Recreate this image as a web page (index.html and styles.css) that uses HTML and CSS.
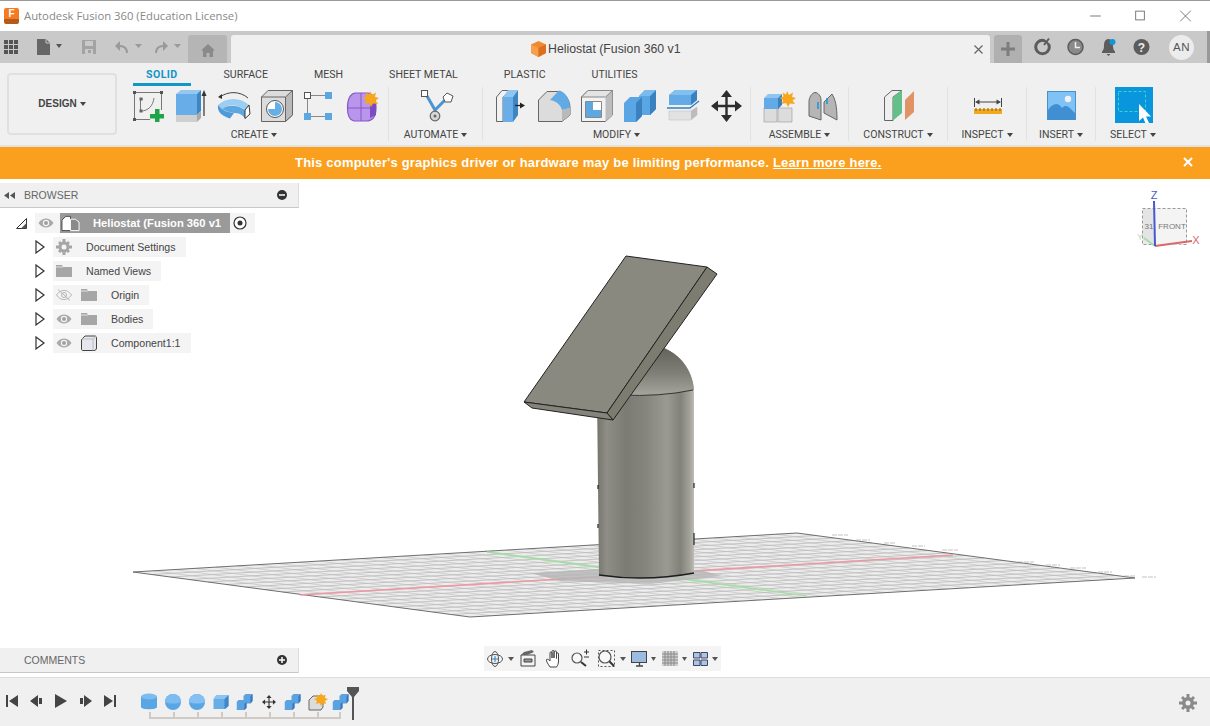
FILE: index.html
```html
<!DOCTYPE html>
<html lang="en">
<head>
<meta charset="utf-8">
<title>Autodesk Fusion 360</title>
<link rel="stylesheet" href="styles.css">
</head>
<body>
<svg class="defs" width="0" height="0" aria-hidden="true">
  <defs>
    <symbol id="eye" viewBox="0 0 16 12"><path d="M.5 6C3 2.5 5.500 1.500 8 1.500S13 2.500 15.500 6C13 9.500 10.500 10.500 8 10.500S3 9.500 .5 6Z" fill="#a9a9a9"/><circle cx="8" cy="6" r="3.200" fill="#f4f4f4"/><circle cx="8" cy="6" r="2" fill="#a0a0a0"/></symbol>
    <symbol id="folder" viewBox="0 0 16 12"><path d="M0 0H6L7 2H16V12H0Z" fill="#a6a6a6"/><path d="M0 2H7" stroke="#e0e0e0" fill="none"/></symbol>
    <symbol id="twisty" viewBox="0 0 10 14"><path d="M1 1L9 7L1 13Z" fill="#fff" stroke="#333" stroke-width="1.200"/></symbol>
    <symbol id="cube2" viewBox="0 0 17 16"><path d="M1 5L4 1H16V12L13 15H1Z" fill="#67ade6"/><path d="M12 5L16 1V12L12 15Z" fill="#3f87c6"/><path d="M1 5L4.500 1H16L12 5Z" fill="#8cc4f0"/></symbol>
    <symbol id="combine" viewBox="0 0 17 16"><path d="M0 8L2 6H7V2L9 0H16V7L14 9.500H10V14L8 16H0Z" fill="#5aa3e0"/><path d="M14 2.500L16 0V7L14 9.500ZM8 10L10 8V14L8 16Z" fill="#3577b4"/></symbol>
    <symbol id="move" viewBox="0 0 16 16"><path d="M8 2V14M2 8H14" stroke="#333" stroke-width="1.300"/><path d="M8 0L11 3.500H5ZM8 16L5 12.500H11ZM0 8L3.500 5V11ZM16 8L12.500 11V5Z" fill="#333"/></symbol>
  </defs>
</svg>

<div class="window">
  <header class="titlebar">
    <span class="logo"><b class="logo-f">F</b></span>
    <span class="title-text">Autodesk Fusion 360 (Education License)</span>
    <div class="win-controls">
      <svg class="win-btn" viewBox="0 0 45 31"><path d="M17 15.500H28" stroke="#777"/></svg>
      <svg class="win-btn" viewBox="0 0 45 31"><rect x="17.500" y="10.500" width="9" height="9" fill="none" stroke="#777"/></svg>
      <svg class="win-btn" viewBox="0 0 45 31"><path d="M17 10L28 21M28 10L17 21" stroke="#777"/></svg>
    </div>
  </header>

  <nav class="appbar">
    <div class="app-tools">
      <svg class="s30" viewBox="0 31 30 32"><path d="M4 40h4v4H4zM9 40h4v4H9zM14 40h4v4h-4zM4 45h4v4H4zM9 45h4v4H9zM14 45h4v4h-4zM4 50h4v4H4zM9 50h4v4H9zM14 50h4v4h-4z" fill="#555"/></svg>
      <svg class="s40" viewBox="30 31 40 32"><path d="M37 39H46L50 43V55H37Z" fill="#666"/><path d="M46 39V43H50" fill="none" stroke="#c9c9c9"/><path d="M56 44H62L59 48Z" fill="#555"/></svg>
      <svg class="s35" viewBox="70 31 35 32"><path d="M82 40H96V54H82Z" fill="#a3a3a3"/><path d="M85 41H93V46H85ZM85 49H93V54H85Z" fill="#c9c9c9"/><path d="M88 50H91V53H88Z" fill="#a3a3a3"/></svg>
      <svg class="s43" viewBox="105 31 43 32"><path d="M127 53C127 47 123 45.500 117 46" fill="none" stroke="#9a9a9a" stroke-width="2"/><path d="M115 46L120 41V51Z" fill="#9a9a9a"/><path d="M135 44H142L138.500 48Z" fill="#9a9a9a"/></svg>
      <svg class="s40" viewBox="148 31 40 32"><path d="M156 53C156 47 160 45.500 166 46" fill="none" stroke="#9a9a9a" stroke-width="2"/><path d="M168 46L163 41V51Z" fill="#9a9a9a"/><path d="M174 44H181L177.500 48Z" fill="#9a9a9a"/></svg>
    </div>
    <div class="home-tab">
      <svg class="home-icon" viewBox="0 0 14 13"><path d="M7 0L14 6.500H12V13H8.500V9H5.500V13H2V6.500H0Z" fill="#8a8a8a"/></svg>
    </div>
    <div class="doc-tab">
      <svg class="doc-cube" viewBox="0 0 15 16"><path d="M7.500 0L15 3.500V12L7.500 16L0 12V3.500Z" fill="#f08a32"/><path d="M7.500 7V16L0 12V3.500Z" fill="#f5a04a"/><path d="M7.500 7V16L15 12V3.500Z" fill="#dc6e1c"/></svg>
      <span class="doc-title">Heliostat (Fusion 360 v1</span>
      <svg class="doc-close" viewBox="0 0 9 9"><path d="M.5 .5L8.500 8.500M8.500 .5L.5 8.500" stroke="#666" stroke-width="1.200"/></svg>
    </div>
    <div class="plus-tab">
      <svg class="plus-icon" viewBox="0 0 14 14"><path d="M5.500 0H8.500V5.500H14V8.500H8.500V14H5.500V8.500H0V5.500H5.500Z" fill="#7d7d7d"/></svg>
    </div>
    <div class="app-status">
      <svg class="status-icon" viewBox="0 0 33 32"><circle cx="16.500" cy="16" r="6.800" fill="none" stroke="#5c5c5c" stroke-width="3"/><path d="M16 6H24V13Z" fill="#c9c9c9"/><path d="M18 14L23 7.500" stroke="#5c5c5c" stroke-width="2"/></svg>
      <svg class="status-icon" viewBox="0 0 33 32"><circle cx="16.500" cy="16" r="7.500" fill="#8a8a8a" stroke="#5c5c5c" stroke-width="1.500"/><path d="M16.500 11V16.500H21" fill="none" stroke="#eee" stroke-width="1.500"/></svg>
      <svg class="status-icon" viewBox="0 0 33 32"><path d="M16.500 8C12.500 8 12 12 12 15C12 18 11 19.500 10 20.500V22H23V20.500C22 19.500 21 18 21 15C21 12 20.500 8 16.500 8Z" fill="#5c5c5c"/><path d="M14.500 23H18.500L16.500 25Z" fill="#5c5c5c"/><circle cx="20.500" cy="11" r="3" fill="#1296db"/></svg>
      <svg class="status-icon" viewBox="0 0 33 32"><circle cx="16.500" cy="16" r="8" fill="#5c5c5c"/><text class="help-q" x="16.500" y="20.500" text-anchor="middle">?</text></svg>
      <span class="avatar">AN</span>
    </div>
  </nav>

  <section class="ribbon">
    <div class="design-wrap"><button class="design-btn">DESIGN<i class="caret"></i></button></div>
    <div class="ribbon-main">
      <div class="tabs">
        <span class="tab is-active">SOLID</span><span class="tab">SURFACE</span><span class="tab">MESH</span><span class="tab">SHEET METAL</span><span class="tab">PLASTIC</span><span class="tab">UTILITIES</span>
      </div>
      <div class="groups">
        <div class="group">
          <div class="tools">
            <svg class="w41" viewBox="128 87 41 36"><path d="M134.500 92.500H161.500V110M134.500 92.500V119.500H150" fill="none" stroke="#777"/><path d="M133 91h3v3h-3zM160 91h3v3h-3zM133 118h3v3h-3z" fill="#555"/><path d="M140.500 111V99H143M141 111C148 111 153 106 154 98" fill="none" stroke="#777"/><path d="M139.500 97.500h3v3h-3zM139.500 109.500h3v3h-3z" fill="#666"/><path d="M155 109H159.500V114H164V118.500H159.500V122H155V118.500H150V114H155Z" fill="#1fa548"/></svg>
            <svg class="w42" viewBox="169 87 42 36"><path d="M176 94L181 90H201L197 94Z" fill="#92c8f2"/><path d="M176 94H197V115H176Z" fill="#68ade8"/><path d="M197 94L201 90V111L197 115Z" fill="#3d86c4"/><path d="M176 115H197V122H176Z" fill="#cfcfcf"/><path d="M197 115L201 111V118L197 122Z" fill="#a9a9a9"/><path d="M204 94V116" stroke="#333" stroke-width="1.200"/><path d="M204 90L201.500 96H206.500Z" fill="#333"/></svg>
            <svg class="w44" viewBox="211 87 44 36"><path d="M218 105C226 97 241 97 249 105L245 110C237 104 228 104 222 109Z" fill="#9ccdf2"/><path d="M218 105C217 112 222 116 230 118.500L234 113C228 112 224 111 222 109Z" fill="#4f9ad8"/><path d="M234 113C238 113 242 114 245 118.500V110C238 105 228 104 222 109C225 111 229 112 234 113Z" fill="#5da7e0"/><path d="M245 110L249 105L250 114L245 118.500Z" fill="#fff" stroke="#333"/><path d="M220 97C228 91 240 91 248 98" fill="none" stroke="#444"/><path d="M218 97L222 94V99Z" fill="#333"/></svg>
            <svg class="w42" viewBox="255 87 42 36"><path d="M261.500 97L268 90.500H292.500V115L285.500 121.500H261.500Z" fill="#dcdcdc" stroke="#666"/><path d="M285.500 97L292.500 90.500V115L285.500 121.500Z" fill="#b9b9b9" stroke="#666"/><path d="M261.500 97H285.500" stroke="#666"/><circle cx="275" cy="109" r="8.500" fill="#fff" stroke="#555"/><path d="M275 102A7 7 0 1 1 268 109L275 109Z" fill="#66aee6"/></svg>
            <svg class="w43" viewBox="297 87 43 36"><path d="M311 95.500H325M307.500 99V113M311 116.500H325" stroke="#888"/><rect x="304.500" y="92.500" width="6" height="6" fill="#fff" stroke="#555"/><path d="M325 92h7v7h-7zM304 113h7v7h-7zM325 113h7v7h-7z" fill="#5ba7e2"/></svg>
            <svg class="w48" viewBox="340 87 48 36"><path d="M355 93H368C374 94 376 100 376 108C376 117 372 121 366 121H354C349 120 347.500 116 347.500 108C347.500 98 350 94 355 93Z" fill="#b996ec" stroke="#8757c8" stroke-width="1.200"/><path d="M348 108H376M361 93V121" stroke="#8757c8"/><path d="M370 103H376V115L370 118Z" fill="#7b4bc0"/><path d="M370 91L372 95L376 92.500L375 97L379 98L375.500 100.500L378 104L373 103.500L371 107L369 103L365 104L366 100L362.500 98L366.500 96.500L365.500 92.500L369 94.500Z" fill="#f8a61c"/></svg>
          </div>
          <div class="group-label label-create">CREATE<i class="caret"></i></div>
        </div>
        <div class="group g-automate">
          <div class="tools">
            <svg class="w93" viewBox="389 87 93 36"><path d="M427 96L435 110L447 98M435 110V116" fill="none" stroke="#4f94d0" stroke-width="3"/><rect x="421.500" y="90.500" width="6" height="6" fill="#fff" stroke="#555"/><path d="M447 93L453 96L451 102H445L443 97Z" fill="#fff" stroke="#555"/><circle cx="435" cy="116" r="4.800" fill="#d6d6d6" stroke="#666" stroke-width="1.200"/><circle cx="435" cy="116" r="1.500" fill="#666"/></svg>
          </div>
          <div class="group-label">AUTOMATE<i class="caret"></i></div>
        </div>
        <div class="group">
          <div class="tools">
            <svg class="w48" viewBox="483 87 48 36"><path d="M496.500 97L502 90.500H510L503 97V121.500H496.500Z" fill="#f2f2f2" stroke="#666"/><path d="M503 97H513V122H503Z" fill="#69aee8"/><path d="M503 97L508 90H518L513 97Z" fill="#8ec6f0"/><path d="M513 97L518 90V115L513 122Z" fill="#3d86c4"/><path d="M515 105.500H522" stroke="#222" stroke-width="1.300"/><path d="M525 105.500L520 102.500V108.500Z" fill="#222"/></svg>
            <svg class="w44" viewBox="531 87 44 36"><path d="M538.500 121.500V100L547 91.500H557C565 92 570 100 570 108V115L562 121.500Z" fill="#dcdcdc" stroke="#666"/><path d="M550 100L559 90.500C566 92 570 100 570 108L562 110C561 105 556 101 550 100Z" fill="#62aae4"/><path d="M562 110L570 108V115L562 121.500Z" fill="#b9b9b9"/></svg>
            <svg class="w43" viewBox="575 87 43 36"><path d="M581.500 97L588 90.500H612.500V115L605.500 121.500H581.500Z" fill="#f2f2f2" stroke="#666"/><path d="M605.500 97L612.500 90.500V115L605.500 121.500Z" fill="#bdbdbd"/><path d="M581.500 97L588 90.500H612.500L605.500 97Z" fill="#e4e4e4" stroke="#888"/><path d="M585.500 101.500H601.500V117.500H585.500Z" fill="#fff" stroke="#888"/><path d="M586 102H593V110H601V117H586Z" fill="#5ea8e2"/></svg>
            <svg class="w44" viewBox="618 87 44 36"><path d="M624 103L630 97H639V96L645 90H656V109L650 115H642V116L636 122H624Z" fill="#5aa5e4"/><path d="M650 96L656 90V109L650 115ZM636 103L642 97V116L636 122Z" fill="#3b80bf"/><path d="M639 96L645 90H656L650 96Z" fill="#79bbee"/></svg>
            <svg class="w43" viewBox="662 87 43 36"><path d="M669 95L675 90H697V100L691 105H669Z" fill="#62abe6"/><path d="M669 95L675 90H697L691 95Z" fill="#82c0ee"/><path d="M691 95L697 90V100L691 105Z" fill="#3b80bf"/><path d="M667 108H690L699 101" fill="none" stroke="#2f80c0" stroke-width="1.300"/><path d="M669 111H691L697 107V115L691 120H669Z" fill="#e2e2e2" stroke="#bbb" stroke-width=".5"/><path d="M691 111L697 107V115L691 120Z" fill="#bcbcbc"/></svg>
            <svg class="w45" viewBox="705 87 45 36"><path d="M726.500 95V117M716 106H737" stroke="#2d2d2d" stroke-width="2.400"/><path d="M726.500 90L732 97H721ZM726.500 122L721 115H732ZM711 106L718 100.500V111.500ZM742 106L735 111.500V100.500Z" fill="#2d2d2d"/></svg>
          </div>
          <div class="group-label">MODIFY<i class="caret"></i></div>
        </div>
        <div class="group">
          <div class="tools">
            <svg class="w50" viewBox="751 87 50 36"><path d="M764 108H777V122H764ZM778 108H792V122H778Z" fill="#dcdcdc" stroke="#999" stroke-width=".6"/><path d="M764 98L768 94H782L778 98Z" fill="#8ec6f0"/><path d="M764 98H778V109H764Z" fill="#62abe6"/><path d="M778 98L782 94V105L778 109Z" fill="#3b80bf"/><path d="M787 91L789 95L793 92.500L792 97L796 98L792.500 100.500L795 104L790 103.500L788 107L786 103L782 104L783 100L779.500 98L783.500 96.500L782.500 92.500L786 94.500Z" fill="#f8a61c"/></svg>
            <svg class="w47" viewBox="801 87 47 36"><path d="M809 116V102C809 97 812 93 815 92.500C818 92.500 821 96 821 100V120Z" fill="#b5b5b5" stroke="#666"/><path d="M824 102L832 94C835 99 837 105 837 120L824 113Z" fill="#b5b5b5" stroke="#666"/><path d="M818 102V109M827 98V104" stroke="#1296db" stroke-width="1.500"/></svg>
          </div>
          <div class="group-label">ASSEMBLE<i class="caret"></i></div>
        </div>
        <div class="group">
          <div class="tools">
            <svg class="w98" viewBox="849 87 98 36"><path d="M884.500 97L892 90.500H902L893 97V120.500H884.500Z" fill="#efefef" stroke="#666"/><path d="M893 97L902 90V113L893 120.500Z" fill="#63c08a"/><path d="M905 100L914 91V112L905 120Z" fill="#e09364"/></svg>
          </div>
          <div class="group-label">CONSTRUCT<i class="caret"></i></div>
        </div>
        <div class="group">
          <div class="tools">
            <svg class="w78" viewBox="948 87 78 36"><path d="M974.500 98V107M1001.500 98V107M977 102H999" stroke="#444"/><path d="M975 102L979.500 99.500V104.500ZM1001 102L996.500 104.500V99.500Z" fill="#444"/><path d="M974 109H1002V114H974Z" fill="#f4a81c"/><path d="M976 108v3M980 108v3M984 108v3M988 108v3M992 108v3M996 108v3M1000 108v3" stroke="#80601a"/></svg>
          </div>
          <div class="group-label">INSPECT<i class="caret"></i></div>
        </div>
        <div class="group">
          <div class="tools">
            <svg class="w68" viewBox="1027 87 68 36"><rect x="1047.500" y="91.500" width="28" height="28" fill="#7fc3f6" stroke="#4a90c8"/><circle cx="1068" cy="99" r="3.200" fill="#f2f2f2"/><path d="M1048 119.500V110C1053 103 1058 102 1062 108C1066 103 1070 108 1075 113V119.500Z" fill="#3f8fd2"/></svg>
          </div>
          <div class="group-label">INSERT<i class="caret"></i></div>
        </div>
        <div class="group g-last">
          <div class="tools">
            <svg class="w74" viewBox="1096 87 74 36"><rect x="1115" y="87" width="38" height="38" fill="#0a96dc"/><rect x="1118.500" y="91.500" width="27" height="20" fill="none" stroke="#3fd4c8" stroke-dasharray="3 2"/><path d="M1139 104V121L1143 117.500L1146 124.500L1149 123L1146 116.500H1151Z" fill="#fff"/></svg>
          </div>
          <div class="group-label">SELECT<i class="caret"></i></div>
        </div>
      </div>
    </div>
  </section>

  <div class="banner">
    <p class="banner-text">This computer's graphics driver or hardware may be limiting performance. <a class="banner-link" href="#">Learn more here.</a></p>
    <svg class="banner-close" viewBox="0 0 10 10"><path d="M1 1L9 9M9 1L1 9" stroke="#fff" stroke-width="2"/></svg>
  </div>

  <main class="viewport">
    <svg class="scene" viewBox="0 179 1210 498" aria-hidden="true">
      <defs>
        <linearGradient id="body" x1="0" x2="1" y1="0" y2="0">
          <stop offset="0" stop-color="#74746c"/><stop offset=".1" stop-color="#8e8e86"/><stop offset=".3" stop-color="#7b7b73"/><stop offset=".5" stop-color="#85857d"/><stop offset=".72" stop-color="#9a9a92"/><stop offset=".86" stop-color="#82827a"/><stop offset=".96" stop-color="#a4a49c"/><stop offset="1" stop-color="#bdbdb4"/>
        </linearGradient>
        <linearGradient id="dome" x1="0" x2="0" y1="0" y2="1">
          <stop offset="0" stop-color="#5f5f57"/><stop offset=".55" stop-color="#807f77"/><stop offset="1" stop-color="#a8a79f"/>
        </linearGradient>
      </defs>
      <path d="M133 572L797 533L1135 578L470 617Z" fill="#ededed"/>
      <path class="grid-a" d="M151.700 574.500l664-39M170.400 577l664-39M189.200 579.500l664-39M207.900 582l664-39M226.600 584.500l664-39M245.300 587l664-39M264.100 589.500l664-39M282.800 592l664-39M301.500 594.500l664-39M320.200 597l664-39M339 599.500l664-39M357.700 602l664-39M376.400 604.500l664-39M395.100 607l664-39M413.900 609.500l664-39M432.600 612l664-39M451.300 614.500l664-39"/>
      <path class="grid-b" d="M153.750 570.780l337 45M174.500 569.560l337 45M195.250 568.340l337 45M216 567.130l337 45M236.750 565.910l337 45M257.500 564.690l337 45M278.250 563.470l337 45M299 562.250l337 45M319.750 561.030l337 45M340.500 559.810l337 45M361.250 558.590l337 45M382 557.380l337 45M402.750 556.160l337 45M423.500 554.940l337 45M444.250 553.720l337 45M465 552.500l337 45M485.750 551.280l337 45M506.500 550.060l337 45M527.250 548.840l337 45M548 547.630l337 45M568.750 546.410l337 45M589.500 545.190l337 45M610.250 543.970l337 45M631 542.750l337 45M651.750 541.530l337 45M672.500 540.310l337 45M693.250 539.090l337 45M714 537.880l337 45M734.750 536.660l337 45M755.500 535.440l337 45M776.250 534.220l337 45"/>
      <path d="M133 572L797 533L1135 578L470 617Z" fill="none" stroke="#6e6e6e"/>
      <path d="M300 595L953 555" stroke="#eb9aa4" stroke-width="1.600"/>
      <path d="M487 552L807 596" stroke="#a2e0a2" stroke-width="1.600"/>
      <path d="M530 573L600 569L700 570L722 576L650 584L560 581Z" fill="#b5b5b5" opacity=".8"/>
      <path d="M832 535H848M856 540H870M884 543H896M912 546H925M942 550H958M1018 562H1034M1046 565H1060M1070 568H1086M1098 572H1112M1124 576H1136M1142 577H1156" stroke="#aaa" stroke-width=".7" stroke-dasharray="5 1"/>
      <path d="M597 393A48.500 48.500 0 0 1 694 393L694 573Q646 582 599 575Z" fill="url(#body)"/>
      <path d="M597 396A48.500 48.500 0 0 1 694 390Q650 398 597 396Z" fill="url(#dome)"/>
      <path d="M620 395Q660 397 693 390" fill="none" stroke="#333"/>
      <path d="M599 575Q646 582 694 573" fill="none" stroke="#1d1d1d" stroke-width="1.500"/>
      <path d="M598 485V489M598 524V528M694 483V488M694 533V545" stroke="#222" stroke-width="1.200"/>
      <path d="M626 256L707 267L607 413L524 402Z" fill="#8a8980" stroke="#222"/>
      <path d="M707 267L717 274L613 420L607 413Z" fill="#7d7c70" stroke="#222"/>
      <path d="M524 402L607 413L613 420L532 408Z" fill="#85847a" stroke="#222"/>
    </svg>

    <aside class="panel browser">
      <div class="panel-head">
        <svg class="collapse" viewBox="0 0 11 7"><path d="M5 0V7L0 3.500ZM11 0V7L6 3.500Z" fill="#555"/></svg>
        <span class="panel-title">BROWSER</span>
        <svg class="panel-sign" viewBox="0 0 10 10"><circle cx="5" cy="5" r="5" fill="#333"/><path d="M2 5H8" stroke="#fff" stroke-width="1.500"/></svg>
      </div>
      <div class="tree">
        <div class="row row-root">
          <svg class="twisty-open" viewBox="0 0 11 11"><path d="M10.500 .5V10.500H.5Z" fill="#fff" stroke="#333"/><path d="M10.500 5V10.500H5Z" fill="#555"/></svg>
          <div class="pill pill-root">
            <svg class="ic16" viewBox="0 0 16 12"><use href="#eye"/></svg>
            <div class="root-sel">
              <svg class="root-ic" viewBox="0 0 20 18"><path d="M1 6L5 2H10V17H1Z" fill="#fff" stroke="#444"/><path d="M10 5H15L19 8V17H10Z" fill="#8a8a8a" stroke="#fff"/></svg>
              <span class="root-name">Heliostat (Fusion 360 v1</span>
            </div>
            <svg class="radio" viewBox="0 0 14 14"><circle cx="7" cy="7" r="6" fill="#fff" stroke="#333" stroke-width="1.200"/><circle cx="7" cy="7" r="2.500" fill="#333"/></svg>
          </div>
        </div>
        <div class="row">
          <svg class="twisty" viewBox="0 0 10 14"><use href="#twisty"/></svg>
          <div class="pill">
            <svg class="ic-large" viewBox="0 0 16 16"><g fill="#a6a6a6"><circle cx="8" cy="8" r="5.500"/><path d="M6.500 0h3v16h-3zM0 6.500h16v3H0z"/><path d="M2 4L4 2L14 12L12 14ZM12 2L14 4L4 14L2 12Z"/></g><circle cx="8" cy="8" r="2.500" fill="#f4f4f4"/></svg>
            <span class="row-text">Document Settings</span>
          </div>
        </div>
        <div class="row">
          <svg class="twisty" viewBox="0 0 10 14"><use href="#twisty"/></svg>
          <div class="pill">
            <svg class="ic16" viewBox="0 0 16 12"><use href="#folder"/></svg>
            <span class="row-text">Named Views</span>
          </div>
        </div>
        <div class="row">
          <svg class="twisty" viewBox="0 0 10 14"><use href="#twisty"/></svg>
          <div class="pill">
            <svg class="ic16" viewBox="0 0 16 12"><path d="M.5 6C3 2.500 5.500 1.500 8 1.500S13 2.500 15.500 6C13 9.500 10.500 10.500 8 10.500S3 9.500 .5 6Z" fill="none" stroke="#b4b4b4"/><circle cx="8" cy="6" r="2.500" fill="none" stroke="#b4b4b4"/><path d="M2 .5L14 11.500" stroke="#b4b4b4"/></svg>
            <svg class="ic16" viewBox="0 0 16 12"><use href="#folder"/></svg>
            <span class="row-text">Origin</span>
          </div>
        </div>
        <div class="row">
          <svg class="twisty" viewBox="0 0 10 14"><use href="#twisty"/></svg>
          <div class="pill">
            <svg class="ic16" viewBox="0 0 16 12"><use href="#eye"/></svg>
            <svg class="ic16" viewBox="0 0 16 12"><use href="#folder"/></svg>
            <span class="row-text">Bodies</span>
          </div>
        </div>
        <div class="row">
          <svg class="twisty" viewBox="0 0 10 14"><use href="#twisty"/></svg>
          <div class="pill">
            <svg class="ic16" viewBox="0 0 16 12"><use href="#eye"/></svg>
            <svg class="ic-large" viewBox="0 0 16 16"><path d="M1 4L4 1H14C15 1 15.500 2 15.500 3V13C15.500 14.500 14.500 15.500 13 15.500H2C1 15.500 .5 15 .5 14V5Z" fill="#e6e6ee" stroke="#444"/><path d="M1 4H12V15.500M12 4L15 1.500" fill="none" stroke="#bbb"/></svg>
            <span class="row-text">Component1:1</span>
          </div>
        </div>
      </div>
    </aside>

    <div class="viewcube">
      <svg class="cube-svg" viewBox="1130 188 75 65">
        <rect x="1142.500" y="208.500" width="44" height="36" fill="#ececec" stroke="#9a9a9a" stroke-dasharray="3 2"/>
        <path d="M1155 209H1186V244L1156 246Z" fill="#f4f4f4"/>
        <path d="M1143 209V240L1155 246V209Z" fill="#e4e4e4"/>
        <path d="M1155 246L1144 238" stroke="#a8dca8" stroke-width="2"/>
        <path d="M1155 246L1192 241" stroke="#d86a6a" stroke-width="2"/>
        <path d="M1155 246L1154 201" stroke="#4a58d0" stroke-width="2"/>
        <text class="axis axis-z" x="1154" y="199" text-anchor="middle">Z</text>
        <text class="axis axis-x" x="1196" y="244" text-anchor="middle">X</text>
        <text class="axis axis-y" x="1140" y="240" text-anchor="middle">Y</text>
        <text class="cube-face" x="1172" y="229" text-anchor="middle">FRONT</text>
        <text class="cube-face" x="1149" y="229" text-anchor="middle">31</text>
      </svg>
    </div>

    <aside class="panel comments">
      <div class="panel-head">
        <span class="panel-title">COMMENTS</span>
        <svg class="panel-sign" viewBox="0 0 10 10"><circle cx="5" cy="5" r="5" fill="#333"/><path d="M2 5H8M5 2V8" stroke="#fff" stroke-width="1.500"/></svg>
      </div>
    </aside>

    <div class="navbar">
      <svg class="n34" viewBox="484 646 34 25"><ellipse cx="495" cy="659" rx="7.500" ry="4.500" fill="none" stroke="#555"/><ellipse cx="495" cy="659" rx="3.500" ry="7.500" fill="none" stroke="#555"/><path d="M495 656V662M492 659H498" stroke="#2f80c0"/><path d="M508 657H514L511 661Z" fill="#555"/></svg>
      <svg class="n24" viewBox="518 646 24 25"><path d="M521 655H535V666H521Z" fill="#f4f4f4" stroke="#444"/><path d="M524 659H532V662H524Z" fill="#999" stroke="#444"/><path d="M521 655L524 652L532 650L534 652L527 655" fill="#666"/></svg>
      <svg class="n26" viewBox="542 646 26 25"><path d="M550 667C548 664 546 661 546.500 659.500C547.500 658.500 549 660 550 661V653C550 651.500 552 651.500 552 653V658V651.500C552 650 554 650 554 651.500V658V652C554 650.500 556.500 650.500 556.500 652V658.500V654C556.500 652.500 558.500 652.500 558.500 654V661C558.500 664 557.500 665.500 556.500 667Z" fill="#fff" stroke="#444"/></svg>
      <svg class="n26" viewBox="568 646 26 25"><circle cx="577" cy="658" r="5" fill="#f8f8f8" stroke="#555" stroke-width="1.200"/><path d="M581 662L586 666" stroke="#333" stroke-width="2"/><path d="M584 652H589M586.500 649.500V654.500M584 657H589" stroke="#333"/></svg>
      <svg class="n34" viewBox="594 646 34 25"><path d="M598.500 650.500H614.500V666.500H598.500Z" fill="none" stroke="#555" stroke-dasharray="2 2"/><circle cx="605" cy="657" r="6" fill="#f8f8f8" stroke="#555" stroke-width="1.200"/><path d="M609.500 661.500L614 666" stroke="#333" stroke-width="2"/><path d="M620 657H626L623 661Z" fill="#555"/></svg>
      <svg class="n30" viewBox="628 646 30 25"><rect x="631.500" y="651.500" width="15" height="11" fill="#9bbce0" stroke="#444"/><path d="M636 666H643M639.500 663V666" stroke="#444" stroke-width="1.300"/><path d="M651 657H656L653.500 661Z" fill="#555"/></svg>
      <svg class="n31" viewBox="658 646 31 25"><rect x="662" y="651" width="16" height="15" fill="#cfcfcf"/><path d="M662 654H678M662 657H678M662 660H678M662 663H678M665 651V666M668 651V666M671 651V666M674 651V666" stroke="#8a8a8a"/><path d="M682 657H687L684.500 661Z" fill="#555"/></svg>
      <svg class="n32" viewBox="689 646 32 25"><path d="M693.500 652.500H700V658H693.500ZM701 652.500H707.500V658H701ZM693.500 660H700V665.500H693.500ZM701 660H707.500V665.500H701Z" fill="#a9c6e6" stroke="#446"/><path d="M712 657H718L715 661Z" fill="#555"/></svg>
    </div>
  </main>

  <footer class="timeline">
    <div class="tl-controls">
      <svg class="tl-btn" viewBox="0 0 24 14"><path d="M6 1H8V13H6ZM18 1V13L9 7Z" fill="#444"/></svg>
      <svg class="tl-btn" viewBox="0 0 24 14"><path d="M6 7L14 1V13ZM15 4H18V10H15Z" fill="#444"/></svg>
      <svg class="tl-btn" viewBox="0 0 26 14"><path d="M7 0V14L19 7Z" fill="#444"/></svg>
      <svg class="tl-btn" viewBox="0 0 24 14"><path d="M6 4H9V10H6ZM10 1L18 7L10 13Z" fill="#444"/></svg>
      <svg class="tl-btn" viewBox="0 0 26 14"><path d="M6 1L15 7L6 13ZM16 1H18V13H16Z" fill="#444"/></svg>
    </div>
    <div class="tl-items">
      <svg class="tl-item" viewBox="0 0 24 18"><path d="M4 3.500V14C4 17 20 17 20 14V3.500Z" fill="#5aa5e4"/><ellipse cx="12" cy="3.500" rx="8" ry="3" fill="#7cbcf0"/></svg>
      <svg class="tl-item" viewBox="0 0 24 18"><circle cx="12" cy="9" r="8" fill="#5aa5e4"/><path d="M4 9A8 8 0 0 1 20 9C16 11 8 11 4 9Z" fill="#7cbcf0"/></svg>
      <svg class="tl-item" viewBox="0 0 24 18"><circle cx="12" cy="9" r="8" fill="#5aa5e4"/><path d="M4 9A8 8 0 0 1 20 9C16 11 8 11 4 9Z" fill="#84c0f2"/></svg>
      <svg class="tl-item" viewBox="0 0 24 18"><use href="#cube2" x="3.500" y=".5" width="17" height="17"/></svg>
      <svg class="tl-item" viewBox="0 0 24 18"><use href="#combine" x="3.500" y=".5" width="17" height="17"/></svg>
      <svg class="tl-item" viewBox="0 0 24 18"><use href="#move" x="5" y="2" width="14" height="14"/></svg>
      <svg class="tl-item" viewBox="0 0 24 18"><use href="#combine" x="3.500" y=".5" width="17" height="17"/></svg>
      <svg class="tl-item" viewBox="0 0 24 18"><path d="M4 7L8 3H18V14L16 17H4Z" fill="#dcdcdc" stroke="#666"/><path d="M16 0L17.500 3L20.500 1.500L20 5L23 6L20 8L21 11L17.500 10L16 13L14.500 10L11 11L12 8L9 6L12 5L11.500 1.500L14.500 3Z" fill="#f8a61c"/></svg>
      <svg class="tl-item" viewBox="0 0 24 18"><use href="#combine" x="3.500" y=".5" width="17" height="17"/></svg>
      <div class="tl-bracket"></div>
    </div>
    <svg class="tl-marker" viewBox="0 0 14 33"><path d="M1 0H13V4L8 10V33H6V10L1 4Z" fill="#555"/></svg>
    <svg class="gear" viewBox="0 0 18 18"><g fill="#8a8a8a"><circle cx="9" cy="9" r="6"/><path d="M7.500 0h3v18h-3zM0 7.500h18v3H0z"/><path d="M2 4L4 2L16 14L14 16ZM14 2L16 4L4 16L2 14Z"/></g><circle cx="9" cy="9" r="2.500" fill="#f0f0f0"/></svg>
  </footer>
</div>
</body>
</html>
```

FILE: styles.css
```css
* { box-sizing: border-box; }
html, body { margin: 0; padding: 0; height: 100%; overflow: hidden; }
body { font-family: "Liberation Sans", Arial, sans-serif; color: #444; background: #fff; }
svg { display: block; flex: none; }
.defs { position: absolute; }

.window { width: 1210px; height: 726px; display: flex; flex-direction: column; }

/* title bar */
.titlebar { height: 31px; display: flex; align-items: center; padding-left: 4px; border-top: 1px solid #999; background: #fff; flex: none; }
.logo { width: 15px; height: 16px; border-radius: 2px; background: linear-gradient(#f57a22 0 70%, #b8591c 70%); display: flex; justify-content: center; margin-right: 5px; }
.logo-f { color: #fff; font-size: 10px; line-height: 11px; font-weight: 700; }
.title-text { font-family: "Open Sans", sans-serif; font-size: 11.300px; color: #888; margin-top: -2px; }
.win-controls { margin-left: auto; display: flex; margin-right: 2px; }
.win-btn { width: 45px; height: 30px; }

/* app bar */
.appbar { height: 32px; background: #c9c9c9; display: flex; align-items: flex-end; flex: none; border-right: 3px solid #999; }
.app-tools { display: flex; }
.s30 { width: 30px; height: 32px; } .s35 { width: 35px; height: 32px; } .s40 { width: 40px; height: 32px; } .s43 { width: 43px; height: 32px; }
.home-tab { width: 39px; height: 28px; background: #b5b5b5; border-radius: 3px 3px 0 0; display: flex; justify-content: center; padding-top: 9px; margin-right: 4px; }
.home-icon { width: 14px; height: 13px; }
.doc-tab { width: 759px; height: 28px; background: #f0f0f0; border-radius: 3px 3px 0 0; display: flex; align-items: center; padding-left: 300px; }
.doc-cube { width: 15px; height: 16px; margin-right: 2px; }
.doc-title { font-size: 12.300px; color: #444; }
.doc-close { width: 9px; height: 9px; margin-left: auto; margin-right: 7px; margin-top: 1px; }
.plus-tab { width: 28px; height: 28px; margin-left: 4px; background: #b0b0b0; border-radius: 3px 3px 0 0; display: flex; align-items: center; justify-content: center; }
.plus-icon { width: 14px; height: 14px; }
.app-status { display: flex; align-items: center; height: 32px; padding-left: 4px; }
.status-icon { width: 33px; height: 32px; }
.help-q { font: 700 12px "Liberation Sans", sans-serif; fill: #eee; }
.avatar { width: 25px; height: 25px; border-radius: 50%; background: #ececec; margin-left: 11px; font-size: 11.500px; color: #555; display: flex; align-items: center; justify-content: center; letter-spacing: .5px; }

/* ribbon */
.ribbon { height: 84px; background: #f0f0f0; border-bottom: 2px solid #e2e2e2; display: flex; flex: none; }
.design-wrap { width: 128px; padding: 10px 0 0 7px; flex: none; }
.design-btn { width: 110px; height: 62px; border: 2px solid #e0e0e0; border-radius: 4px; background: #f0f0f0; font: 700 10px "Liberation Sans", sans-serif; color: #444; padding: 0 0 2px; }
.caret { display: inline-block; width: 0; height: 0; border: 3px solid transparent; border-top: 4px solid #444; border-bottom: 0; margin-left: 3px; vertical-align: 1px; }
.ribbon-main { flex: 1; min-width: 0; display: flex; flex-direction: column; }
.tabs { display: flex; gap: 20px; padding-left: 5px; height: 24px; flex: none; }
.tab { height: 23px; padding: 5px 13px 0; font: 10.600px/14px Roboto, sans-serif; color: #444; white-space: nowrap; }
.tab.is-active { color: #1296c8; font-weight: 700; border-bottom: 3px solid #1296c8; letter-spacing: .4px; }
.groups { display: flex; }
.group { display: flex; flex-direction: column; border-right: 1px solid #e2e2e2; height: 54px; }
.group.g-last { border-right: 0; }
.tools { display: flex; height: 36px; }
.tools svg { height: 36px; }
.w41 { width: 41px; } .w42 { width: 42px; } .w43 { width: 43px; } .w44 { width: 44px; } .w45 { width: 45px; } .w47 { width: 47px; } .w48 { width: 48px; } .w50 { width: 50px; } .w68 { width: 68px; } .w74 { width: 74px; } .w78 { width: 78px; } .w93 { width: 93px; } .w98 { width: 98px; }
.group-label { text-align: center; font: 10.500px/24px Roboto, sans-serif; color: #444; white-space: nowrap; }
.label-create { padding-right: 8px; }

/* banner */
.banner { height: 32px; background: #fba01e; display: flex; align-items: center; padding: 0 0 2px 295px; flex: none; }
.banner-text { margin: 0; font-size: 13px; font-weight: 700; color: #fff; white-space: nowrap; letter-spacing: .2px; }
.banner-link { color: #fff; text-decoration: underline; }
.banner-close { width: 10px; height: 10px; margin-left: auto; margin-right: 17px; }

/* viewport */
.viewport { position: relative; height: 498px; flex: none; background: #fff; overflow: hidden; }
.scene { position: absolute; inset: 0; width: 1210px; height: 498px; }
.grid-a, .grid-b { fill: none; stroke: #a8a8a8; stroke-width: .6; }
.grid-b { stroke: #bcbcbc; }
.panel { position: absolute; left: 0; width: 299px; }
.browser { top: 4px; }
.comments { bottom: 4px; }
.panel-head { height: 25px; background: #f0f0f0; border-bottom: 1px solid #c8c8c8; border-right: 1px solid #ddd; display: flex; align-items: center; padding: 0 11px 0 24px; position: relative; }
.collapse { position: absolute; left: 4px; top: 9px; width: 11px; height: 7px; }
.panel-title { font-size: 10.500px; color: #666; }
.panel-sign { width: 10px; height: 10px; margin-left: auto; }
.tree { margin-top: 3px; }
.row { height: 24px; display: flex; align-items: center; padding-left: 35px; }
.twisty { width: 10px; height: 14px; margin-right: 8px; }
.row-root { padding-left: 16px; }
.twisty-open { width: 11px; height: 11px; margin-right: 8px; }
.pill { height: 20px; background: #f4f4f4; display: flex; align-items: center; padding: 0 10px 0 3px; gap: 9px; }
.ic16 { width: 16px; height: 12px; }
.ic-large { width: 16px; height: 16px; }
.row-text { font-size: 10.600px; color: #444; white-space: nowrap; margin-left: 5px; }
.pill-root { width: 220px; padding: 0; gap: 0; }
.pill-root > .ic16 { margin: 0 6px 0 3px; }
.root-sel { width: 170px; height: 20px; background: #9a9a9a; display: flex; align-items: center; padding-left: 1px; }
.root-ic { width: 19px; height: 18px; }
.root-name { font-size: 11.200px; font-weight: 700; color: #fff; margin-left: 13px; white-space: nowrap; }
.radio { width: 14px; height: 14px; margin-left: 3px; }

.viewcube { position: absolute; left: 1130px; top: 9px; }
.cube-svg { width: 75px; height: 65px; }
.axis { font: 11px "Liberation Sans", sans-serif; }
.axis-z { fill: #4a58d0; } .axis-x { fill: #d86a6a; } .axis-y { fill: #b4dcb4; font-size: 9px; }
.cube-face { font: 8px "Liberation Sans", sans-serif; fill: #777; }

.navbar { position: absolute; left: 484px; bottom: 6px; height: 25px; width: 237px; background: #f4f4f4; display: flex; }
.navbar svg { height: 25px; }
.n24 { width: 24px; } .n26 { width: 26px; } .n30 { width: 30px; } .n31 { width: 31px; } .n32 { width: 32px; } .n34 { width: 34px; }

/* timeline */
.timeline { flex: 1; background: #f0f0f0; border-top: 1px solid #ddd; display: flex; align-items: flex-start; padding-top: 9px; }
.tl-controls { display: flex; width: 137px; padding-top: 7px; flex: none; }
.tl-btn { width: 24px; height: 14px; }
.tl-btn:nth-child(3), .tl-btn:nth-child(5) { width: 26px; }
.tl-items { position: relative; display: flex; height: 32px; padding-top: 6px; flex: none; }
.tl-item { width: 24px; height: 18px; }
.tl-bracket { position: absolute; left: 12px; right: 12px; bottom: 0; height: 7px; border-bottom: 2px solid #cfcac4; border-right: 2px solid #cfcac4; background: repeating-linear-gradient(90deg, #cfcac4 0 2px, transparent 2px 24px); }
.tl-marker { width: 14px; height: 33px; margin-left: -7px; }
.gear { width: 18px; height: 18px; margin-left: auto; margin-right: 13px; margin-top: 7px; }
```
